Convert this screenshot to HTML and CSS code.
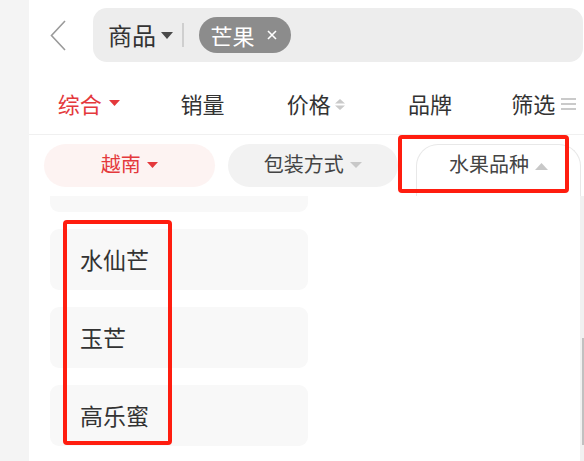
FILE: index.html
```html
<!DOCTYPE html>
<html lang="zh-CN">
<head>
<meta charset="utf-8">
<title>商品搜索 - 芒果</title>
<link rel="stylesheet" href="styles.css">
</head>
<body>
<div class="app">
  <aside class="side"></aside>
  <main class="main">
    <header class="search-row">
      <svg class="back" width="16" height="31" viewBox="0 0 16 31"><path d="M15 1 L1.5 15.5 L15 30" fill="none" stroke="#9a9a9a" stroke-width="1.6"/></svg>
      <div class="search-box">
        <span class="scope">商品</span>
        <svg class="scope-caret" width="12" height="7" viewBox="0 0 12 7"><path d="M0 0 H12 L6 7 Z" fill="#4a4a4a"/></svg>
        <span class="divider"></span>
        <span class="tag">芒果<svg class="tag-x" width="10" height="10" viewBox="0 0 10 10"><path d="M1 1 L9 9 M9 1 L1 9" stroke="#fff" stroke-width="1.6"/></svg></span>
      </div>
    </header>

    <nav class="tabs">
      <div class="tab tab--active">综合<svg class="ico-caret" width="11" height="6" viewBox="0 0 11 6"><path d="M0 0 H11 L5.5 6 Z" fill="#e4393c"/></svg></div>
      <div class="tab">销量</div>
      <div class="tab tab--sort">价格<svg class="ico-sort" width="12" height="11" viewBox="0 0 12 11"><path d="M1 4.5 L6 0 L11 4.5 Z M1 6.5 L11 6.5 L6 11 Z" fill="#cacaca"/></svg></div>
      <div class="tab">品牌</div>
      <div class="tab tab--filter">筛选<svg class="ico-menu" width="15" height="12" viewBox="0 0 15 12"><path d="M0 1 H15 M0 6 H15 M0 11 H15" stroke="#cacaca" stroke-width="1.8"/></svg></div>
    </nav>

    <div class="filters">
      <div class="chip chip--selected">越南<svg class="chip-caret" width="11" height="6" viewBox="0 0 11 6"><path d="M0 0 H11 L5.5 6 Z" fill="#e4393c"/></svg></div>
      <div class="chip">包装方式<svg class="chip-caret" width="12" height="6" viewBox="0 0 12 6"><path d="M0 0 H12 L6 6 Z" fill="#c8c8c8"/></svg></div>
      <div class="chip chip--open">水果品种<svg class="chip-caret" width="13" height="7" viewBox="0 0 13 7"><path d="M0 7 H13 L6.5 0 Z" fill="#c8c8c8"/></svg></div>
    </div>

    <section class="panel">
      <div class="options">
        <div class="option option--clipped"></div>
        <div class="option">水仙芒</div>
        <div class="option">玉芒</div>
        <div class="option">高乐蜜</div>
      </div>
      <div class="scroll-track"><div class="scroll-thumb"></div></div>
    </section>
  </main>
</div>

<div class="mark mark--chip"></div>
<div class="mark mark--list"></div>
</body>
</html>
```

FILE: styles.css
```css
* { box-sizing: border-box; }

html, body {
  margin: 0;
  padding: 0;
  height: 100%;
  overflow: hidden;
}

body {
  font-family: "Noto Sans CJK SC", "Noto Sans", sans-serif;
  color: #333;
  background: #fff;
  position: relative;
}

.app {
  display: flex;
  height: 461px;
}

.side {
  width: 29px;
  flex: none;
  background: #f4f4f4;
}

.main {
  flex: 1;
  min-width: 0;
  display: flex;
  flex-direction: column;
  background: #fff;
}

/* search header */
.search-row {
  display: flex;
  align-items: center;
  padding: 8px 1px 0 21px;
  height: 62px;
}

.back {
  flex: none;
  margin-right: 27px;
}

.search-box {
  flex: 1;
  height: 54px;
  background: #ededed;
  border-radius: 14px;
  display: flex;
  align-items: center;
  padding-left: 15px;
}

.scope {
  font-size: 24px;
  line-height: 30px;
  color: #333;
}

.scope-caret {
  margin-left: 5px;
}

.divider {
  width: 1.5px;
  height: 24px;
  background: #cfcfcf;
  margin: 0 15px 0 9px;
}

.tag {
  display: flex;
  align-items: center;
  height: 36px;
  padding: 0 14px 0 12px;
  background: #8c8c8c;
  border-radius: 18px;
  color: #fff;
  font-size: 22px;
  line-height: 36px;
}

.tag-x {
  margin-left: 12px;
}

/* sort tabs */
.tabs {
  display: grid;
  grid-template-columns: repeat(5, 113.75px);
  padding: 26px 0 16px 3px;
  border-bottom: 1px solid #f0f0f0;
  overflow: hidden;
}

.tab {
  display: flex;
  align-items: center;
  justify-content: center;
  font-size: 22px;
  line-height: 30px;
  color: #333;
  white-space: nowrap;
}

.tab--active { color: #e4393c; }
.ico-caret { margin-left: 7px; }
.ico-sort { margin-left: 3px; margin-top: 2px; }
.ico-menu { margin-left: 6px; margin-top: 2px; }

/* filter chips */
.filters {
  display: flex;
  align-items: flex-start;
  gap: 13px;
  padding: 9px 3px 0 15px;
  height: 61px;
}

.chip {
  flex: 1;
  height: 43px;
  border-radius: 22px;
  background: #f2f2f2;
  display: flex;
  align-items: flex-start;
  justify-content: center;
  font-size: 20px;
  line-height: 40px;
  color: #444;
  white-space: nowrap;
}

.chip-caret {
  margin-left: 6px;
  margin-top: 18px;
}

.chip--selected {
  background: #fdf3f2;
  color: #e4393c;
}

.chip--open {
  flex: none;
  width: 165px;
  margin-left: 5px;
  height: 52px;
  background: #fff;
  border: 1px solid #e8e8e8;
  border-bottom: none;
  border-radius: 22px 22px 0 0;
  line-height: 38px;
}

/* options panel */
.panel {
  flex: 1;
  display: flex;
  overflow: hidden;
}

.options {
  flex: 1;
  padding-left: 21px;
  display: flex;
  flex-direction: column;
  gap: 17px;
}

.option {
  width: 258px;
  height: 61px;
  flex: none;
  background: #f8f8f8;
  border-radius: 9px;
  padding-left: 30px;
  font-size: 23px;
  line-height: 61px;
  color: #333;
}

.option--clipped {
  height: 16px;
  border-radius: 0 0 9px 9px;
}

.scroll-track {
  width: 4px;
  flex: none;
  background: #f1f1f1;
  display: flex;
  flex-direction: column;
  align-items: flex-end;
}

.scroll-thumb {
  width: 2.5px;
  height: 107px;
  margin-top: 142px;
  background: #c1c1c1;
}

/* red annotation marks */
.mark {
  position: absolute;
  border: 4px solid #ff1d0f;
  border-radius: 4px;
  pointer-events: none;
}

.mark--chip {
  left: 398px;
  top: 135px;
  width: 171px;
  height: 58px;
}

.mark--list {
  left: 63px;
  top: 220px;
  width: 109px;
  height: 225px;
}
```
